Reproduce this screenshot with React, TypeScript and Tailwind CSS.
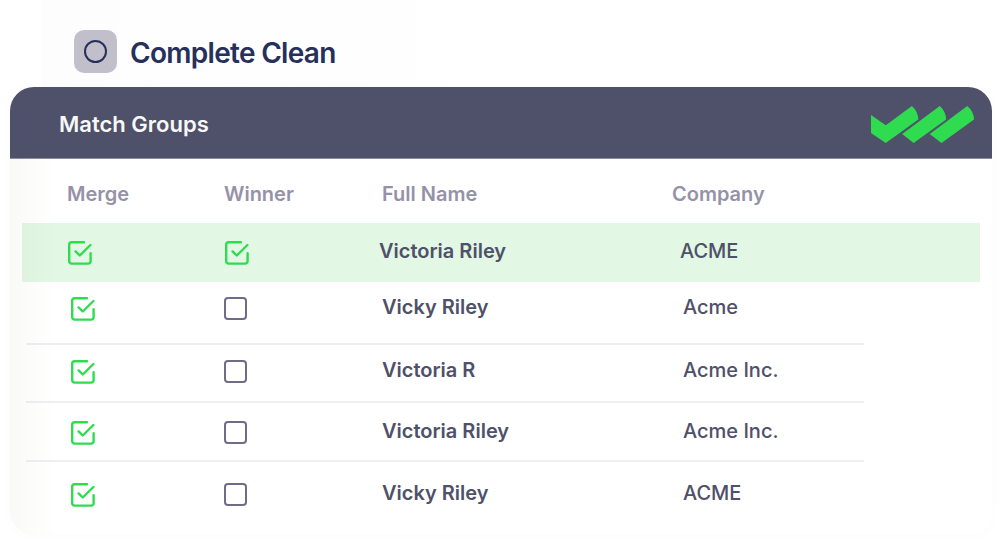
import clsx from "clsx";

interface MatchRow {
  name: string;
  company: string;
  winner: boolean;
  rowClass: string;
  padClass: string;
}

const rows: MatchRow[] = [
  { name: "Victoria Riley", company: "ACME", winner: true, rowClass: "h-[59px]", padClass: "pt-[18px]" },
  { name: "Vicky Riley", company: "Acme", winner: false, rowClass: "h-[63px]", padClass: "pt-[15px]" },
  { name: "Victoria R", company: "Acme Inc.", winner: false, rowClass: "h-[58px]", padClass: "pt-[15px]" },
  { name: "Victoria Riley", company: "Acme Inc.", winner: false, rowClass: "h-[59px]", padClass: "pt-[18px]" },
  { name: "Vicky Riley", company: "ACME", winner: false, rowClass: "h-[73px]", padClass: "pt-[21px]" },
];

function Logo() {
  return (
    <svg viewBox="33 77 307 110" className="h-[37px] w-[103px] fill-[#2fdc50]" aria-hidden="true">
      <path d="M33 104 77 134 155 77Q173 93 174 117L77 187 33 157Z" />
      <path d="M126 160 238 77Q256 93 257 117L160 187Z" />
      <path d="M208 160 320 77Q339 93 340 117L243 187Z" />
    </svg>
  );
}

function Checkbox({ label, checked }: { label: string; checked: boolean }) {
  return (
    <label className="relative block size-6 cursor-pointer">
      <input
        type="checkbox"
        aria-label={label}
        defaultChecked={checked}
        className="peer block size-[23px] appearance-none rounded border-2 border-[#6f6c88] checked:border-transparent"
      />
      <svg
        viewBox="0 0 24 24"
        className="pointer-events-none absolute inset-0 hidden size-6 fill-none stroke-[#2fdc50] stroke-[2.4] peer-checked:block"
        strokeLinecap="round"
        strokeLinejoin="round"
      >
        <path d="M16 1.2H3.6A2.4 2.4 0 0 0 1.2 3.6V20.2A2.4 2.4 0 0 0 3.6 22.6H20.2A2.4 2.4 0 0 0 22.6 20.2V12.2" />
        <path d="M7.6 10.4 11.8 14.5 22.4 4" />
      </svg>
    </label>
  );
}

export default function App() {
  return (
    <main className="min-h-screen overflow-hidden bg-white px-[10px] font-['Inter',sans-serif] text-[#4f5069]">
      <div className="ml-8 flex h-[87px] items-center gap-[13px] bg-linear-to-r from-[#fdfdfd] to-white to-50% pt-4 pl-8">
        <span className="flex size-[43px] items-center justify-center rounded-[10px] bg-[#c1bfca]">
          <span className="size-[23px] rounded-full border-2 border-[#26305a]" />
        </span>
        <h1 className="pt-0.5 text-[28px] font-semibold tracking-tight text-[#26305a]">Complete Clean</h1>
      </div>

      <section className="relative mr-[-1px] overflow-hidden rounded-[24px] bg-white shadow-[0_0_16px_rgba(0,0,0,0.02)]">
        <header className="flex h-[72px] items-center justify-between border-b border-[#8d8c9f] bg-[#4f5069] pt-1 pr-[18px] pl-[49px]">
          <h2 className="text-[22px] font-semibold text-[#f8f8f6]">Match Groups</h2>
          <Logo />
        </header>

        <div className="pr-3 pl-4">
          <table className="w-full table-fixed border-separate border-spacing-0 text-left text-xl leading-5">
            <colgroup>
              <col className="w-[198px]" />
              <col className="w-[155px]" />
              <col />
              <col className="w-[192px]" />
              <col className="w-[116px]" />
            </colgroup>
            <thead>
              <tr className="h-16 align-top text-[#9592a8]">
                <th className="pt-[25px] pl-[41px] font-semibold">Merge</th>
                <th className="pt-[25px] font-semibold">Winner</th>
                <th className="pt-[25px] pl-[3px] font-semibold">Full Name</th>
                <th className="pt-[25px] font-semibold">Company</th>
                <td />
              </tr>
            </thead>
            <tbody>
              {rows.map((row, i) => {
                const cell = clsx(
                  row.padClass,
                  i > 0 && i < rows.length - 1 && "border-b-2 border-[#efeff2]"
                );
                return (
                  <tr
                    key={i}
                    className={clsx(
                      "align-top",
                      row.rowClass,
                      row.winner && "bg-[#e2f7e4] shadow-[-4px_0_0_#e2f7e4]"
                    )}
                  >
                    <td className={clsx(cell, row.winner ? "pl-[42px]" : "pl-[45px]")}>
                      <Checkbox label={`Merge ${row.name}`} checked />
                    </td>
                    <td className={clsx(cell, row.winner && "pl-px")}>
                      <Checkbox label={`Winner ${row.name}`} checked={row.winner} />
                    </td>
                    <td className={clsx(cell, "font-semibold", !row.winner && "pl-[3px]")}>{row.name}</td>
                    <td className={clsx(cell, "font-medium", row.winner ? "pl-2" : "pl-[11px]")}>
                      {row.company}
                    </td>
                    <td />
                  </tr>
                );
              })}
            </tbody>
          </table>
        </div>

        {/* soft shade down the left edge */}
        <div className="pointer-events-none absolute top-[72px] bottom-0 left-0 w-11 bg-linear-to-r from-[#404000]/3 to-transparent" />
      </section>
    </main>
  );
}
